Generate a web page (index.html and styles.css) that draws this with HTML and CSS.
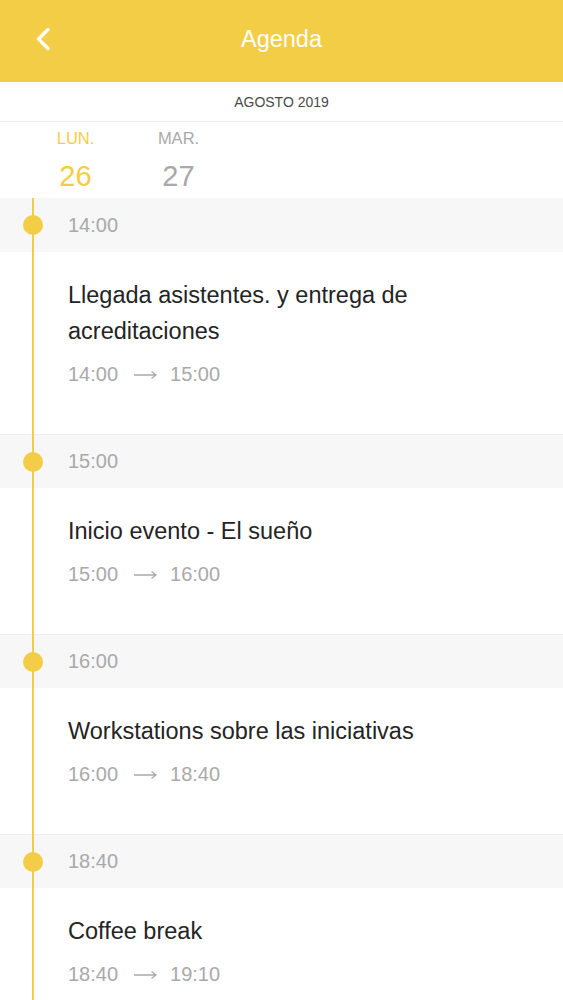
FILE: index.html
```html
<!DOCTYPE html>
<html lang="es">
<head>
  <meta charset="UTF-8" />
  <meta name="viewport" content="width=device-width, initial-scale=1.0" />
  <title>Agenda</title>
  <link rel="stylesheet" href="styles.css">
</head>
<body>
  <header class="topbar">
    <button class="back" aria-label="Volver">
      <svg width="16" height="24" viewBox="0 0 16 24"><path d="M13 2.5 L3.5 12 L13 21.5" fill="none" stroke="#fff" stroke-width="3.4" stroke-linecap="round" stroke-linejoin="round"/></svg>
    </button>
    <h1>Agenda</h1>
  </header>

  <div class="month">AGOSTO 2019</div>

  <nav class="days">
    <div class="day active">
      <span class="day-name">LUN.</span>
      <span class="day-num">26</span>
    </div>
    <div class="day">
      <span class="day-name">MAR.</span>
      <span class="day-num">27</span>
    </div>
  </nav>

  <main class="timeline">
    <section class="slot">
      <div class="slot-head"><span class="dot"></span>14:00</div>
      <div class="slot-body">
        <h2>Llegada asistentes. y entrega de acreditaciones</h2>
        <p class="range">14:00 <svg class="arrow" width="23" height="10" viewBox="0 0 23 10"><path d="M0 5 H22 M17.5 1.5 L22 5 L17.5 8.5" fill="none" stroke="#a9a9a9" stroke-width="1.3"/></svg> 15:00</p>
      </div>
    </section>

    <section class="slot">
      <div class="slot-head"><span class="dot"></span>15:00</div>
      <div class="slot-body">
        <h2>Inicio evento - El sueño</h2>
        <p class="range">15:00 <svg class="arrow" width="23" height="10" viewBox="0 0 23 10"><path d="M0 5 H22 M17.5 1.5 L22 5 L17.5 8.5" fill="none" stroke="#a9a9a9" stroke-width="1.3"/></svg> 16:00</p>
      </div>
    </section>

    <section class="slot">
      <div class="slot-head"><span class="dot"></span>16:00</div>
      <div class="slot-body">
        <h2>Workstations sobre las iniciativas</h2>
        <p class="range">16:00 <svg class="arrow" width="23" height="10" viewBox="0 0 23 10"><path d="M0 5 H22 M17.5 1.5 L22 5 L17.5 8.5" fill="none" stroke="#a9a9a9" stroke-width="1.3"/></svg> 18:40</p>
      </div>
    </section>

    <section class="slot">
      <div class="slot-head"><span class="dot"></span>18:40</div>
      <div class="slot-body">
        <h2>Coffee break</h2>
        <p class="range">18:40 <svg class="arrow" width="23" height="10" viewBox="0 0 23 10"><path d="M0 5 H22 M17.5 1.5 L22 5 L17.5 8.5" fill="none" stroke="#a9a9a9" stroke-width="1.3"/></svg> 19:10</p>
      </div>
    </section>
  </main>
</body>
</html>
```

FILE: styles.css
```css
:root {
  --yellow: #f4cd47;
  --text: #242424;
  --muted: #a9a9a9;
  --band: #f7f7f7;
  --line: #ededed;
}

* {
  box-sizing: border-box;
  margin: 0;
  padding: 0;
}

body {
  font-family: 'Liberation Sans', Arial, sans-serif;
  background: #ffffff;
  color: var(--text);
  width: 563px;
  overflow: hidden;
}

.topbar {
  height: 82px;
  background: var(--yellow);
  display: flex;
  align-items: center;
  justify-content: center;
  position: relative;
}

.topbar h1 {
  color: #ffffff;
  font-size: 23.5px;
  font-weight: 400;
  margin-top: -4px;
}

.back {
  position: absolute;
  left: 35px;
  top: 27px;
  background: none;
  border: none;
  display: flex;
}

.month {
  height: 40px;
  display: flex;
  align-items: center;
  justify-content: center;
  font-size: 14px;
  color: #4a4a4a;
  border-bottom: 1px solid var(--line);
}

.days {
  display: flex;
  padding-left: 24px;
  height: 76px;
}

.day {
  width: 103px;
  display: flex;
  flex-direction: column;
  align-items: center;
  color: var(--muted);
}

.day.active {
  color: var(--yellow);
}

.day-name {
  font-size: 16.5px;
  margin-top: 6px;
  line-height: 20px;
}

.day-num {
  font-size: 29px;
  margin-top: 9px;
  line-height: 38px;
}

.timeline {
  position: relative;
}

.timeline::before {
  content: '';
  position: absolute;
  left: 32px;
  top: 0;
  bottom: 0;
  width: 2px;
  background: var(--yellow);
  z-index: 1;
}

.slot-head {
  height: 54px;
  background: var(--band);
  display: flex;
  align-items: center;
  padding-left: 68px;
  font-size: 20px;
  color: var(--muted);
  position: relative;
  border-top: 1px solid var(--line);
}

.slot:first-child .slot-head {
  border-top: none;
}

.dot {
  position: absolute;
  left: 23px;
  top: 50%;
  width: 20px;
  height: 20px;
  margin-top: -10px;
  border-radius: 50%;
  background: var(--yellow);
  z-index: 2;
}

.slot-body {
  padding: 25px 30px 48px 68px;
}

.slot-body h2 {
  font-size: 23.5px;
  font-weight: 400;
  line-height: 36px;
  color: var(--text);
}

.range {
  margin-top: 13px;
  font-size: 20px;
  line-height: 24px;
  color: var(--muted);
  display: flex;
  align-items: center;
}

.arrow {
  margin: 1px 13px 0 16px;
}
```
